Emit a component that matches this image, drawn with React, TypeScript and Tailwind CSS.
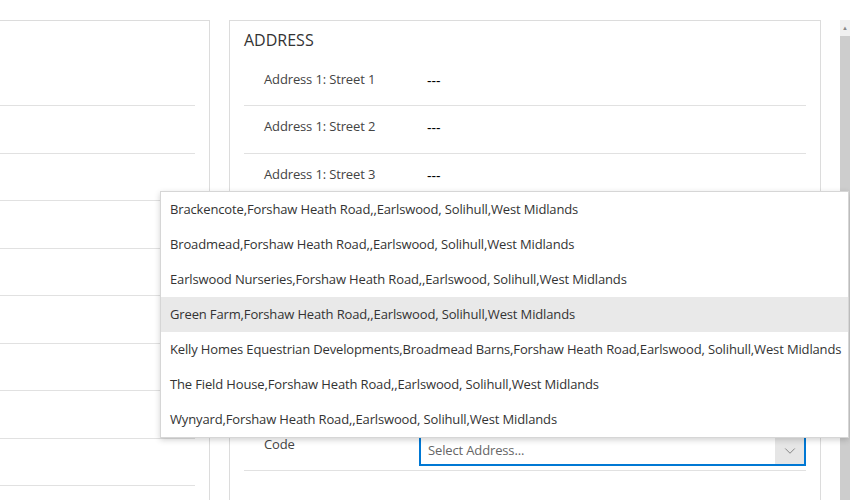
import { ChevronDown } from "lucide-react";

const options = [
  "Brackencote,Forshaw Heath Road,,Earlswood, Solihull,West Midlands",
  "Broadmead,Forshaw Heath Road,,Earlswood, Solihull,West Midlands",
  "Earlswood Nurseries,Forshaw Heath Road,,Earlswood, Solihull,West Midlands",
  "Green Farm,Forshaw Heath Road,,Earlswood, Solihull,West Midlands",
  "Kelly Homes Equestrian Developments,Broadmead Barns,Forshaw Heath Road,Earlswood, Solihull,West Midlands",
  "The Field House,Forshaw Heath Road,,Earlswood, Solihull,West Midlands",
  "Wynyard,Forshaw Heath Road,,Earlswood, Solihull,West Midlands",
];

const rows = ["Address 1: Street 1", "Address 1: Street 2", "Address 1: Street 3"];

function Row({ label }: { label: string }) {
  return (
    <div className="flex h-[47.5px] items-start border-b border-[#e1e1e1] pl-5 pt-[11px] leading-[18px]">
      <div className="w-[163px] text-[13px] tracking-[-0.14px] text-[#444]">{label}</div>
      <div className="pt-[2px] text-[14px] text-black">---</div>
    </div>
  );
}

export default function App() {
  return (
    <div className="relative h-[500px] w-[850px] overflow-hidden bg-white font-['Open_Sans',sans-serif]">
      <div className="flex pt-5">
        <div className="flex w-[210px] shrink-0 flex-col border-r border-t border-[#dcdcdc] pr-[14px]">
          <div className="h-[85px] shrink-0 border-b border-[#e1e1e1]" />
          {Array.from({ length: 8 }).map((_, i) => (
            <div key={i} className="h-[47.5px] shrink-0 border-b border-[#e1e1e1]" />
          ))}
        </div>
        <div className="ml-[19px] h-[480px] w-[592px] shrink-0 border-l border-r border-t border-[#dcdcdc] px-[14px]">
          <div className="h-[37.5px] pt-[8px] text-[16px] leading-[22px] text-[#333]">ADDRESS</div>
          {rows.map((r) => (
            <Row key={r} label={r} />
          ))}
          <div className="h-[190px] border-b border-[#e1e1e1]" />
          {/* zip row: first label line sits under the open dropdown */}
          <div className="flex h-[80px] items-start border-b border-[#e1e1e1] pl-5">
            <div className="w-[155px] pt-[44px] text-[13px] leading-[18px] tracking-[-0.14px] text-[#444]">Code</div>
            <div className="mt-[45px] flex h-[30px] flex-1 items-stretch border-2 border-[#0078d4] bg-white">
              <div className="flex flex-1 items-center pl-[7px] text-[13px] tracking-[-0.14px] text-[#666]">Select Address...</div>
              <div className="flex w-[29px] items-center justify-center bg-[#e6e6e6]">
                <ChevronDown size={18} strokeWidth={1} color="#666" />
              </div>
            </div>
          </div>
        </div>
        <div className="ml-[19px] flex h-[480px] w-[10px] shrink-0 flex-col bg-[#f0f0f0]">
          <div className="flex h-4 items-center justify-center text-[6px] leading-none text-[#888]">▲</div>
          <div className="flex-1 bg-[#cdcdcd]" />
        </div>
      </div>

      <div className="absolute left-[160px] top-[191px] w-[689px] border border-[#d6d6d6] bg-white shadow-[0_2px_6px_rgba(0,0,0,0.18)]">
        {options.map((o, i) => (
          <div
            key={o}
            className={`flex h-[35px] items-center whitespace-nowrap pl-[9px] text-[13px] tracking-[-0.14px] text-[#333] ${i === 3 ? "bg-[#e9e9e9]" : ""}`}
          >
            {o}
          </div>
        ))}
      </div>
    </div>
  );
}
